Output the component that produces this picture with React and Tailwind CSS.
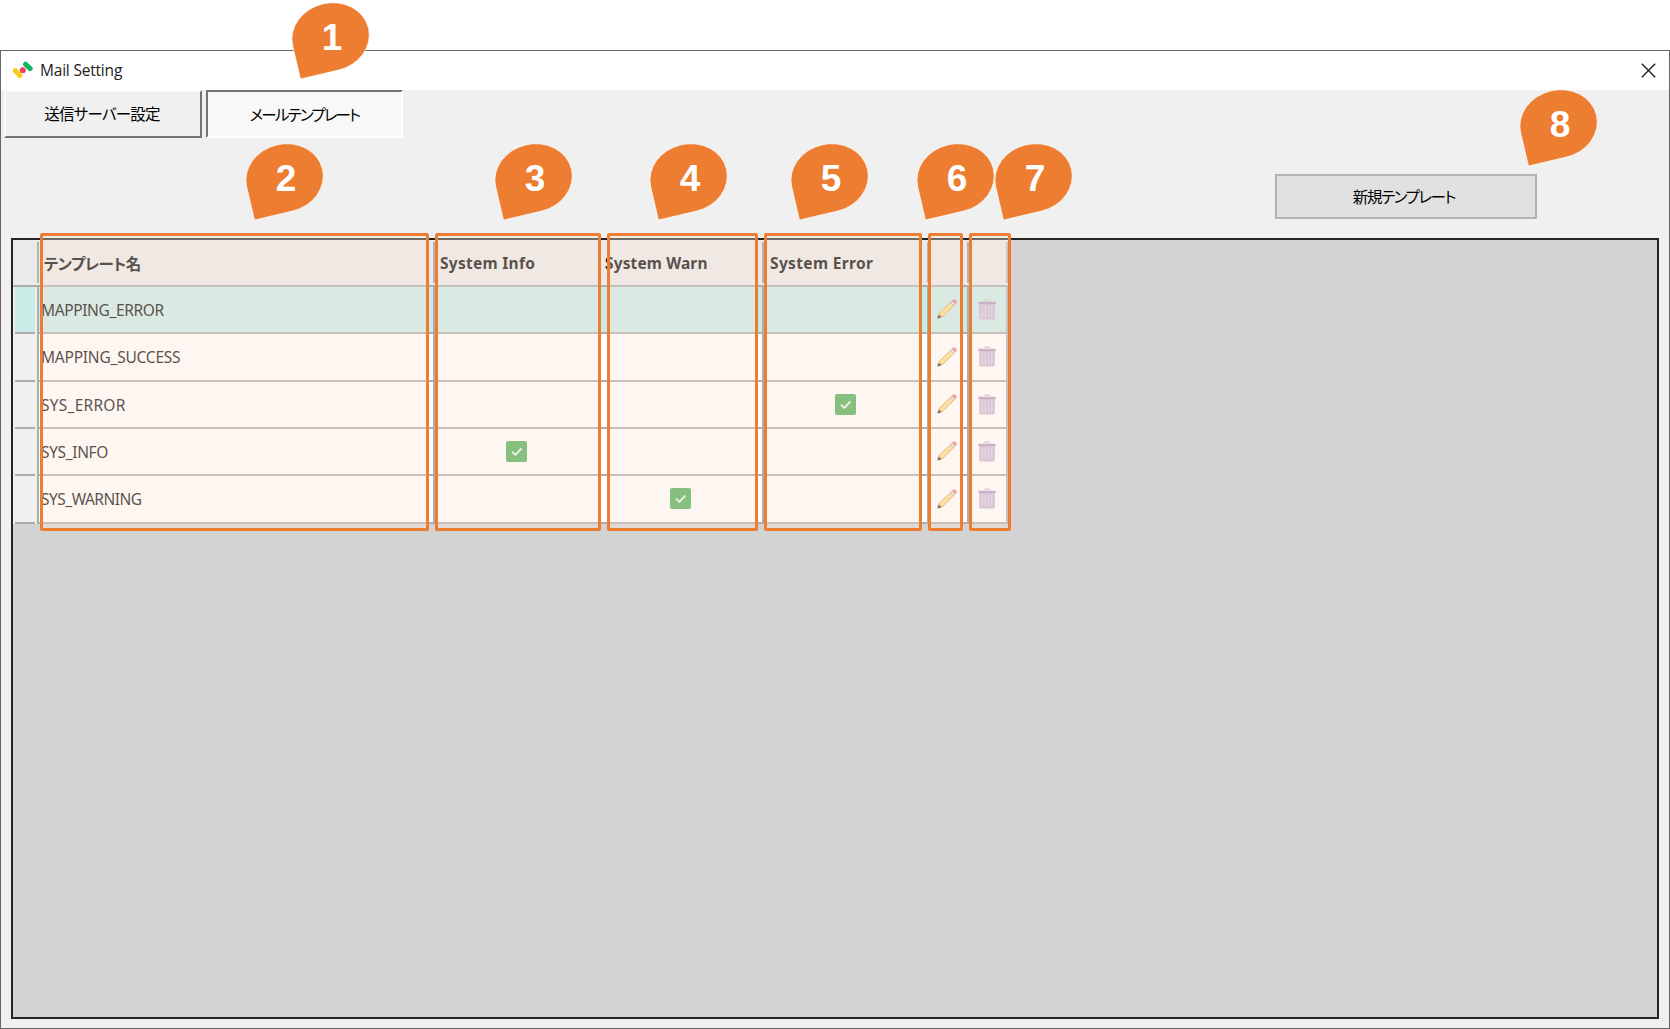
import React from "react";

const markers = [
  { n: 1, pos: "left-[292px] top-[3px]" },
  { n: 2, pos: "left-[246px] top-[144px]" },
  { n: 3, pos: "left-[495px] top-[144px]" },
  { n: 4, pos: "left-[650px] top-[144px]" },
  { n: 5, pos: "left-[791px] top-[144px]" },
  { n: 6, pos: "left-[917px] top-[144px]" },
  { n: 7, pos: "left-[995px] top-[144px]" },
  { n: 8, pos: "left-[1520px] top-[90px]" },
];

const frames = [
  "left-[40px] w-[389px]",
  "left-[435px] w-[166px]",
  "left-[607px] w-[151px]",
  "left-[764px] w-[158px]",
  "left-[928px] w-[35px]",
  "left-[969px] w-[42px]",
];

const rows = [
  { name: "MAPPING_ERROR", tracking: "tracking-[-0.37px]", h: "h-[47px]", selected: true },
  { name: "MAPPING_SUCCESS", tracking: "tracking-[-0.22px]", h: "h-[48px]" },
  { name: "SYS_ERROR", tracking: "tracking-[0.25px]", h: "h-[47px]", error: true },
  { name: "SYS_INFO", tracking: "tracking-[-0.35px]", h: "h-[47px]", info: true },
  { name: "SYS_WARNING", tracking: "tracking-[-0.5px]", h: "h-[48px]", warn: true },
];

const columns = "grid grid-cols-[26px_396px_165px_164px_165px_40px_39px]";

function Marker({ n, pos }) {
  return (
    <div className={`absolute h-[77px] w-[78px] ${pos}`}>
      <svg className="absolute inset-0 overflow-visible" width="78" height="77">
        <g transform="translate(38.6 34) rotate(-13.2)">
          <path
            d="M-38.9 34V0A38.9 34 0 0 1 38.9 0A38.9 34 0 0 1 0 34Z"
            fill="#ed7d31"
            stroke="#ffffff"
            strokeWidth="0.6"
          />
        </g>
      </svg>
      <span className="relative flex h-[68px] items-center justify-center pl-[2px] font-['Liberation_Sans',sans-serif] text-[37px] leading-none font-bold text-white">
        {n}
      </span>
    </div>
  );
}

function Check() {
  return (
    <svg className="mr-[1px] mb-[1px]" width="21" height="21" viewBox="0 0 21 21">
      <rect width="21" height="21" rx="2" fill="#48ac4f" />
      <path d="M6 10.6L9.3 13.9L15.4 7.5" fill="none" stroke="#e8f5e9" strokeWidth="1.9" />
    </svg>
  );
}

function Pencil() {
  return (
    <svg className="mr-[2px] mb-[1px]" width="20" height="20" viewBox="0 0 20 20">
      <path d="M0.8 19.2L2 14L13.2 3.2L16.8 6.8L5.8 17.8Z" fill="#e0ad48" />
      <path d="M2 14.9L3 14.2L13.4 4.3L15.7 6.6L5.6 16.7L4 16.9Z" fill="#ffe08a" />
      <path d="M0.8 19.2L2 14.6L5.4 17.9Z" fill="#b98f66" />
      <path d="M0.4 19.6L1.2 15.9L4 18.6Z" fill="#2d2522" />
      <path d="M13 3.4L14.8 1.6L18.4 5.2L16.6 7Z" fill="#b2b5c4" />
      <path d="M14 3.6L15.2 2.4L17.6 4.8L16.4 6Z" fill="#dcdde6" />
      <path d="M14.9 1.6L15.8 0.8Q17.4 0 18.8 1.2Q20.2 2.6 19.3 4.2L18.4 5.1Z" fill="#f0706f" />
    </svg>
  );
}

function Trash() {
  return (
    <svg className="mr-[2px] mb-[1px]" width="18" height="21" viewBox="0 0 18 21">
      <path d="M6 2.5Q6 1 9 1T12 2.5" fill="none" stroke="#c9c4cf" strokeWidth="1.3" />
      <path d="M1.2 4.5H16.8V19Q16.8 20.4 15.2 20.4H2.8Q1.2 20.4 1.2 19Z" fill="#c5b3d4" />
      <path d="M4.3 6.5V18.8M7.4 6.5V18.8M10.6 6.5V18.8M13.7 6.5V18.8" stroke="#dacfe5" strokeWidth="1.5" />
      <path d="M0.3 2.8H17.7V5H0.3Z" fill="#b096c2" />
    </svg>
  );
}

function Cell({ children, className = "", selected }) {
  return (
    <div
      className={`flex items-center border-r-2 border-b-2 border-[#adadad] ${selected ? "bg-[#c8ebe6]" : "bg-white"} ${className}`}
    >
      {children}
    </div>
  );
}

function HeadCell({ children, className = "" }) {
  return (
    <div className="flex items-center border-b-2 border-[#adadad] bg-[#eaeaea]">
      <div
        className={`flex h-[41px] w-full items-center border-r-2 border-[#b3b3b3] pt-[2px] font-['Noto_Sans','Noto_Sans_CJK_JP',sans-serif] text-[15.5px] leading-none font-bold whitespace-nowrap text-black ${className}`}
      >
        {children}
      </div>
    </div>
  );
}

export default function App() {
  return (
    <div className="relative h-[1029px] w-[1670px] overflow-hidden bg-white pt-[50px] font-['Noto_Sans','Noto_Sans_CJK_JP',sans-serif]">
      <div className="flex h-[979px] flex-col border border-[#666666] bg-[#f0f0f0]">
        <header className="flex h-[39px] shrink-0 items-center justify-between bg-white pr-[13px] pl-[11px]">
          <div className="flex items-center gap-[6px]">
            <svg width="22" height="20" viewBox="0 0 22 20">
              <path d="M3.3 9.6L7.8 14.6" stroke="#fcc917" strokeWidth="5" strokeLinecap="round" />
              <path d="M13.6 3.2L18.2 7.6" stroke="#12b861" strokeWidth="5" strokeLinecap="round" />
              <circle cx="10.8" cy="9.2" r="3" fill="#f43f5e" />
            </svg>
            <span className="font-['Open_Sans',sans-serif] text-[15.5px] leading-none tracking-[-0.2px] text-[#222222]">
              Mail Setting
            </span>
          </div>
          <svg className="mb-[1px]" width="15" height="15" viewBox="0 0 15 15">
            <path d="M0.8 0.8L14.2 14.2M14.2 0.8L0.8 14.2" stroke="#222222" strokeWidth="1.4" />
          </svg>
        </header>

        <nav className="flex h-[48px] shrink-0 gap-[4px] pl-[3px] text-[15.5px] text-black">
          <button className="flex h-[48px] w-[198px] items-center justify-center border-t-2 border-r-2 border-b-2 border-l-2 border-t-[#fafafa] border-r-[#737373] border-b-[#737373] border-l-[#fafafa] pr-[2px] pb-[1px]">
            <span className="font-['Noto_Sans_CJK_JP',sans-serif] tracking-[-0.75px] [font-feature-settings:'palt']">送信サーバー設定</span>
          </button>
          <button className="flex h-[48px] w-[197px] items-center justify-center border-t-2 border-r-2 border-b-2 border-l-2 border-t-[#737373] border-r-white border-b-white border-l-[#737373] bg-[#f8f8f8] pt-[1px]">
            <span className="font-['Noto_Sans_CJK_JP',sans-serif] tracking-[-1.8px] [font-feature-settings:'palt']">メールテンプレート</span>
          </button>
        </nav>

        <div className="flex h-[100px] shrink-0 justify-end pt-[36px] pr-[132px]">
          <button className="flex h-[45px] w-[262px] items-center justify-center border-2 border-[#b3b3b3] bg-[#e1e1e1] pr-[4px] text-[15.5px] text-black">
            <span className="font-['Noto_Sans_CJK_JP',sans-serif] tracking-[-1.4px] [font-feature-settings:'palt']">新規テンプレート</span>
          </button>
        </div>

        <main className="mr-[10px] mb-[9px] ml-[10px] flex-1 border-2 border-[#242424] bg-[#d3d3d3]">
          <div className="w-[995px]">
            <div className={`${columns} h-[47px]`}>
              <HeadCell />
              <HeadCell className="pl-[5px]">
                <span className="font-['Noto_Sans_CJK_JP',sans-serif] tracking-[-0.5px] [font-feature-settings:'palt']">テンプレート名</span>
              </HeadCell>
              <HeadCell className="pl-[5px] tracking-[0.28px]">System Info</HeadCell>
              <HeadCell className="pl-[5px] tracking-[0.12px]">System Warn</HeadCell>
              <HeadCell className="pl-[6px] tracking-[0.35px]">System Error</HeadCell>
              <HeadCell />
              <HeadCell />
            </div>
            {rows.map((row) => (
              <div key={row.name} className={`${columns} ${row.h}`}>
                <div className="flex border-r-2 border-[#adadad] bg-[#f0f0f0] pr-[2px] pl-[2px]">
                  <div
                    className={`w-full border-b-2 border-[#adadad] ${row.selected ? "bg-[#c8ebe6]" : "bg-[#f0f0f0]"}`}
                  />
                </div>
                <Cell selected={row.selected} className="pt-[2px] pl-[2px]">
                  <span className={`text-[15.5px] leading-none text-black ${row.tracking}`}>{row.name}</span>
                </Cell>
                <Cell selected={row.selected} className="justify-center">{row.info && <Check />}</Cell>
                <Cell selected={row.selected} className="justify-center">{row.warn && <Check />}</Cell>
                <Cell selected={row.selected} className="justify-center">{row.error && <Check />}</Cell>
                <Cell selected={row.selected} className="justify-center">
                  <Pencil />
                </Cell>
                <Cell selected={row.selected} className="justify-center">
                  <Trash />
                </Cell>
              </div>
            ))}
          </div>
        </main>
      </div>

      {frames.map((frame) => (
        <div
          key={frame}
          className={`absolute top-[233px] h-[298px] rounded-[2px] border-3 border-[#ed7d31] bg-[#fbe5d6]/35 ${frame}`}
        />
      ))}
      {markers.map((marker) => (
        <Marker key={marker.n} {...marker} />
      ))}
    </div>
  );
}
